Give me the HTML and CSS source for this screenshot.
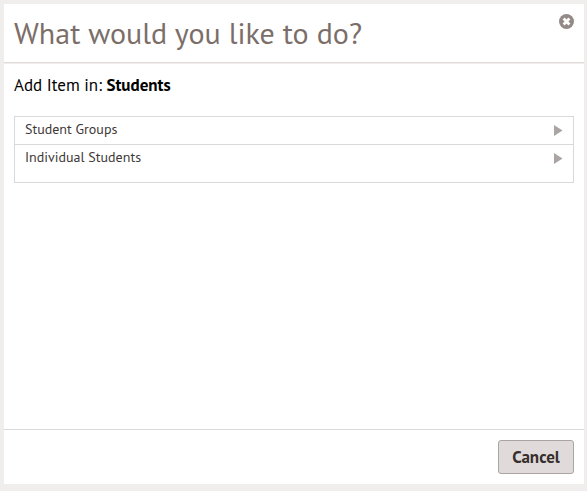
FILE: index.html
```html
<!DOCTYPE html>
<html lang="en">
<head>
<meta charset="utf-8">
<title>Add Item</title>
<link rel="stylesheet" href="styles.css">
</head>
<body>
<main class="dialog">
  <header class="dialog-header">
    <h1 class="title">What would you like to do?</h1>
    <svg class="close" viewBox="0 0 15 15" role="img" aria-label="Close"><circle cx="7.5" cy="7.5" r="7.5"/><path d="M4.6 4.6l5.8 5.8M10.4 4.6l-5.8 5.8"/></svg>
  </header>
  <section class="content">
    <p class="context">Add Item in: <strong>Students</strong></p>
    <ul class="options">
      <li class="option"><span>Student Groups</span><svg class="arrow" viewBox="0 0 9 11"><path d="M0 0L8.5 5.5L0 11z"/></svg></li>
      <li class="option"><span>Individual Students</span><svg class="arrow" viewBox="0 0 9 11"><path d="M0 0L8.5 5.5L0 11z"/></svg></li>
    </ul>
  </section>
  <footer class="dialog-footer"><button class="cancel">Cancel</button></footer>
</main>
</body>
</html>
```

FILE: styles.css
```css
* { box-sizing: border-box; }
body {
  margin: 0;
  height: 491px;
  padding: 4px 3px 7px 4px;
  overflow: hidden;
  background: #efeeec;
  font-family: "PT Sans", "Noto Sans", sans-serif;
}
.dialog {
  display: flex;
  flex-direction: column;
  height: 480px;
  background: #fff;
}
.dialog-header {
  display: flex;
  justify-content: space-between;
  height: 60px;
  padding: 0 10px;
  border-bottom: 1px solid #f0edec;
  box-shadow: inset 0 -1px #e0dbd9;
}
.title {
  margin: 0;
  font-size: 30px;
  font-weight: 400;
  line-height: 57px;
  color: #7b6e69;
  white-space: nowrap;
}
.close { width: 15px; height: 15px; margin-top: 10px; }
.close circle { fill: #938a87; }
.close path { stroke: #fff; stroke-width: 2.8; }
.content { flex: 1; padding: 10px 10px 0; }
.context {
  margin: 0 0 20px;
  height: 22px;
  line-height: 22px;
  font-size: 17px;
  color: #000;
  white-space: nowrap;
}
.options {
  margin: 0;
  padding: 0;
  height: 67px;
  list-style: none;
  border: 1px solid #d9d9d9;
}
.option {
  display: flex;
  justify-content: space-between;
  height: 28px;
  padding: 0 10px;
  font-size: 14px;
  line-height: 25px;
  color: #403837;
}
.option:first-child { border-bottom: 1px solid #d9d9d9; }
.arrow { width: 9px; height: 11px; margin-top: 8px; fill: #aaa4a2; }
.dialog-footer {
  display: flex;
  justify-content: flex-end;
  height: 55px;
  padding: 10px;
  border-top: 1px solid #d9d9d9;
}
.cancel {
  width: 76px;
  height: 34px;
  padding: 0;
  border: 1px solid #aaa5a3;
  border-radius: 3px;
  background: #e0dbda;
  color: #362f2d;
  font: bold 17px/32px "PT Sans", "Noto Sans", sans-serif;
}
```
